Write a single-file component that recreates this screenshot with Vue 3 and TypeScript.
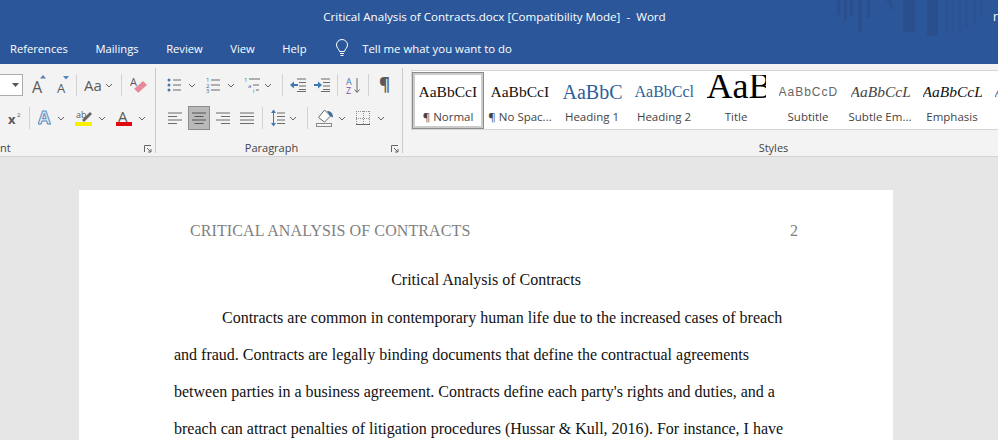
<script setup lang="ts">
import { ref } from "vue";

const tabs = ref(["References", "Mailings", "Review", "View", "Help"]);

// Style gallery
const styles = ref([
  { name: "¶ Normal", cls: "normal" },
  { name: "¶ No Spac...", cls: "nospace" },
  { name: "Heading 1", cls: "h1" },
  { name: "Heading 2", cls: "h2" },
  { name: "Title", cls: "title" },
  { name: "Subtitle", cls: "subtitle" },
  { name: "Subtle Em...", cls: "subtle" },
  { name: "Emphasis", cls: "emphasis" },
  { name: "", cls: "intense" },
]);

const previewText: Record<string, string> = {
  normal: "AaBbCcI",
  nospace: "AaBbCcI",
  h1: "AaBbC",
  h2: "AaBbCcl",
  title: "AaB",
  subtitle: "AaBbCcD",
  subtle: "AaBbCcL",
  emphasis: "AaBbCcL",
  intense: "AaBbCcL",
};

const bodyLines = ref([
  "Contracts are common in contemporary human life due to the increased cases of breach",
  "and fraud. Contracts are legally binding documents that define the contractual agreements",
  "between parties in a business agreement. Contracts define each party's rights and duties, and a",
  "breach can attract penalties of litigation procedures (Hussar & Kull, 2016). For instance, I have",
]);

// darker stripes of the title bar artwork: x, width, height
const stripes = [
  [57, 3, 15], [64, 3, 21], [70, 3, 15], [78, 4, 32], [87, 3, 18],
  [123, 12, 32], [147, 11, 36],
];
const faintStripes = [
  [165, 3, 34], [172, 3, 34], [178, 3, 32], [185, 3, 28], [193, 3, 24], [200, 3, 16],
];
</script>

<template>
  <div class="word">
    <header class="titlebar">
      <svg class="art" width="220" height="40" aria-hidden="true">
        <rect
          v-for="s in stripes"
          :key="s[0]"
          :x="s[0]"
          y="0"
          :width="s[1]"
          :height="s[2]"
          fill="#2a4f8c"
        />
        <rect
          v-for="s in faintStripes"
          :key="s[0]"
          :x="s[0]"
          y="0"
          :width="s[1]"
          :height="s[2]"
          fill="#2b5394"
        />
        <path d="M106 0h5l4 13z" fill="#2a4f8c" />
      </svg>
      <span class="doc-title">Critical Analysis of Contracts.docx [Compatibility Mode]&nbsp; -&nbsp; Word</span>
      <span class="user">re</span>
    </header>

    <nav class="tabs">
      <span v-for="t in tabs" :key="t" class="tab">{{ t }}</span>
      <svg class="bulb" width="14" height="18" viewBox="0 0 14 18" fill="none" stroke="#fff" stroke-width="1">
        <path d="M4.5 12.5c0-2-3-3.500-3-6.500a5.500 5.500 0 0 1 11 0c0 3-3 4.500-3 6.500z" />
        <path d="M5 14.500h4M5.500 16.500h3" />
      </svg>
      <span class="tell">Tell me what you want to do</span>
    </nav>

    <section class="ribbon">
      <!-- Font -->
      <div class="group font-group">
        <div class="row">
          <div class="size-box"><svg width="7" height="4"><path d="M0 0h7L3.500 4z" fill="#555" /></svg></div>
          <svg class="ml9" width="14" height="20">
            <text x="0" y="18" class="glyph" font-size="16">A</text>
            <path d="M8 3.500h6L11 0z" fill="#5b7fa8" />
          </svg>
          <svg class="ml11" width="13" height="20">
            <text x="0" y="18" class="glyph" font-size="13">A</text>
            <path d="M6 1h6L9 4.500z" fill="#4e86c0" />
          </svg>
          <i class="sep ml6"></i>
          <svg class="ml7" width="17" height="20"><text x="0" y="16" class="glyph" font-size="15">Aa</text></svg>
          <svg class="chev ml4" width="8" height="5"><path d="M1 1l3 3 3-3" /></svg>
          <i class="sep ml8"></i>
          <svg class="ml8" width="17" height="20">
            <text x="0" y="11" class="glyph" font-size="11">A</text>
            <path d="M4 14l9-8 4 4-9 8z" fill="#e8899a" />
            <path d="M4 14l4 4" stroke="#fbe4e8" />
          </svg>
        </div>
        <div class="row row2">
          <svg class="ml8" width="13" height="14">
            <text x="0" y="13" class="glyph bold" font-size="13">x</text>
            <text x="9" y="6" class="glyph" font-size="6">2</text>
          </svg>
          <i class="sep ml8"></i>
          <svg class="ml8" width="15" height="18">
            <text x="0" y="15" class="effect" font-size="18">A</text>
          </svg>
          <svg class="chev ml4" width="8" height="5"><path d="M1 1l3 3 3-3" /></svg>
          <svg class="ml10" width="18" height="18">
            <text x="1" y="9" class="glyph" font-size="9">ab</text>
            <path d="M7 11l8-8 2 2-8 8z" fill="#666" />
            <rect x="0" y="13" width="17" height="4" fill="#f7f000" />
          </svg>
          <svg class="chev ml5" width="8" height="5"><path d="M1 1l3 3 3-3" /></svg>
          <svg class="ml10" width="16" height="18">
            <text x="2" y="13" class="glyph" font-size="15">A</text>
            <rect x="0" y="13" width="16" height="4" fill="#e00b12" />
          </svg>
          <svg class="chev ml6" width="8" height="5"><path d="M1 1l3 3 3-3" /></svg>
        </div>
        <div class="group-label font-label">
          <span class="clipped">nt</span>
          <svg class="launcher" width="8" height="8"><path d="M.5 7V.5H7M3 3l4 4M4 7h3V4" /></svg>
        </div>
      </div>

      <!-- Paragraph -->
      <div class="group para-group">
        <div class="row">
          <svg class="ml11" width="14" height="14">
            <g fill="#4b75a5"><circle cx="2" cy="2" r="1.500" /><circle cx="2" cy="7" r="1.500" /><circle cx="2" cy="12" r="1.500" /></g>
            <path d="M6 2h8M6 7h8M6 12h8" stroke="#6b6b6b" />
          </svg>
          <svg class="chev ml7" width="8" height="5"><path d="M1 1l3 3 3-3" /></svg>
          <svg class="ml10" width="14" height="16">
            <g class="tiny"><text x="0" y="5">1</text><text x="0" y="10.500">2</text><text x="0" y="16">3</text></g>
            <path d="M5 3h9M5 8h9M5 13h9" stroke="#6b6b6b" />
          </svg>
          <svg class="chev ml7" width="8" height="5"><path d="M1 1l3 3 3-3" /></svg>
          <svg class="ml9" width="16" height="16">
            <g class="tiny"><text x="0" y="5">1</text><text x="4" y="10.500">a</text><text x="9" y="16" fill="#666">i</text></g>
            <path d="M5 2h11M9 8h6M12 13h3" stroke="#6b6b6b" />
          </svg>
          <svg class="chev ml4" width="8" height="5"><path d="M1 1l3 3 3-3" /></svg>
          <i class="sep ml10"></i>
          <svg class="ml7" width="16" height="14">
            <path d="M7 1h9M9 4.500h7M9 8h7M9 11.500h7M7 13.500h9" stroke="#6b6b6b" />
            <path d="M0 7l4-3.500V6h4v2H4v2.500z" fill="#3c78b5" />
          </svg>
          <svg class="ml8" width="16" height="14">
            <path d="M7 1h9M9 4.500h7M9 8h7M9 11.500h7M7 13.500h9" stroke="#6b6b6b" />
            <path d="M8 7L4 3.500V6H0v2h4v2.500z" fill="#3c78b5" />
          </svg>
          <i class="sep ml7"></i>
          <svg class="ml8" width="14" height="17">
            <text x="0" y="8" class="sort-a" font-size="9">A</text>
            <text x="0" y="16.500" class="sort-z" font-size="9">Z</text>
            <path d="M11 1v14M8.500 12.500l2.500 3 2.500-3" fill="none" stroke="#666" />
          </svg>
          <i class="sep ml8"></i>
          <svg class="ml10" width="11" height="18"><text x="0" y="15" class="glyph bold" font-size="17">¶</text></svg>
        </div>
        <div class="row row2">
          <svg class="ml12" width="14" height="12"><path d="M0 1h14M0 4.500h9M0 8h14M0 11.500h9" stroke="#6b6b6b" /></svg>
          <div class="selected ml6">
            <svg width="14" height="12"><path d="M0 1h14M2.500 4.500h9M0 8h14M2.500 11.500h9" stroke="#555" /></svg>
          </div>
          <svg class="ml6" width="14" height="12"><path d="M0 1h14M5 4.500h9M0 8h14M5 11.500h9" stroke="#6b6b6b" /></svg>
          <svg class="ml10" width="14" height="12"><path d="M0 1h14M0 4.500h14M0 8h14M0 11.500h14" stroke="#6b6b6b" /></svg>
          <i class="sep ml8"></i>
          <svg class="ml8" width="14" height="18">
            <path d="M6 4h8M6 7.500h8M6 11h8M6 14.500h8" stroke="#6b6b6b" />
            <path d="M2.500 3v12" stroke="#3c78b5" />
            <path d="M0 4l2.500-3.500L5 4zM0 14l2.500 3.500L5 14z" fill="#3c78b5" />
          </svg>
          <svg class="chev ml4" width="8" height="5"><path d="M1 1l3 3 3-3" /></svg>
          <i class="sep ml10"></i>
          <svg class="ml8" width="18" height="18">
            <path d="M2.500 8.500L8.500 1l6 6-6 6z" fill="#fff" stroke="#666" />
            <path d="M11 2c4 0 6 2.500 6 6.500l-3-1.500z" fill="#3f6f9f" />
            <rect x=".5" y="14.500" width="15" height="3" fill="#f7f7f7" stroke="#8a8a8a" />
          </svg>
          <svg class="chev ml4" width="8" height="5"><path d="M1 1l3 3 3-3" /></svg>
          <svg class="ml10" width="14" height="14">
            <path d="M0 .5h14M0 7.500h14M.5 0v14M7.500 0v14M13.500 0v14" fill="none" stroke="#8f8f8f" stroke-dasharray="1 1" />
            <path d="M0 13.500h14" stroke="#666" />
          </svg>
          <svg class="chev ml7" width="8" height="5"><path d="M1 1l3 3 3-3" /></svg>
        </div>
        <div class="group-label para-label">
          Paragraph
          <svg class="launcher" width="8" height="8"><path d="M.5 7V.5H7M3 3l4 4M4 7h3V4" /></svg>
        </div>
      </div>

      <!-- Styles -->
      <div class="group styles-group">
        <div class="gallery">
          <div
            v-for="s in styles"
            :key="s.cls"
            class="style-item"
            :class="{ active: s.cls === 'normal' }"
          >
            <div class="preview" :class="s.cls">{{ previewText[s.cls] }}</div>
            <div class="style-name">{{ s.name }}</div>
          </div>
        </div>
        <div class="group-label styles-label">Styles</div>
      </div>
    </section>

    <main class="canvas">
      <article class="page">
        <div class="page-header">
          <span class="running-head">CRITICAL ANALYSIS OF CONTRACTS</span>
          <span>2</span>
        </div>
        <h1 class="doc-heading">Critical Analysis of Contracts</h1>
        <p
          v-for="(line, i) in bodyLines"
          :key="i"
          class="line"
          :class="{ indent: i === 0 }"
        >
          {{ line }}
        </p>
      </article>
    </main>
  </div>
</template>

<style scoped>
.word {
  width: 998px;
  height: 440px;
  overflow: hidden;
  position: relative;
  background: #e6e6e6;
  font-family: "Open Sans", "Noto Sans", sans-serif;
}

.titlebar {
  height: 32px;
  background: #2b579a;
  color: #fff;
  position: relative;
  display: flex;
  justify-content: center;
  align-items: center;
}

.art {
  position: absolute;
  left: 780px;
  top: 0;
}

.doc-title {
  font-size: 11.600px;
  margin-left: -9px;
}

.user {
  position: absolute;
  left: 993px;
  top: 8px;
  font-size: 12px;
}

.tabs {
  height: 32px;
  background: #2b579a;
  color: #fff;
  display: flex;
  align-items: center;
  padding-left: 10px;
  font-size: 11.200px;
}

.tab {
  margin-right: 27.600px;
}

.bulb {
  margin-left: 1px;
}

.tell {
  margin-left: 13px;
  font-size: 11.400px;
}

.ribbon {
  height: 92px;
  background: #f3f3f3;
  border-bottom: 1px solid #d4d4d4;
  display: flex;
}

.group {
  position: relative;
  flex: none;
  height: 92px;
  box-sizing: border-box;
  padding-top: 10px;
}

.group::after {
  content: "";
  position: absolute;
  right: 0;
  top: 4px;
  bottom: 3px;
  width: 1px;
  background: #c9c9c9;
}

.font-group {
  width: 156px;
}

.para-group {
  width: 247px;
}

.styles-group {
  width: 595px;
  padding-top: 6px;
  padding-left: 8px;
}

.styles-group::after {
  display: none;
}

.row {
  height: 22px;
  display: flex;
  align-items: center;
}

.row2 {
  margin-top: 11px;
}

.size-box {
  width: 23px;
  height: 22px;
  box-sizing: border-box;
  background: #fff;
  border: 1px solid #ababab;
  border-left: none;
  display: flex;
  align-items: center;
  justify-content: flex-end;
  padding-right: 3px;
}

.sep {
  display: block;
  width: 1px;
  height: 22px;
  background: #d2d2d2;
}

.ml4 { margin-left: 4px; }
.ml5 { margin-left: 5px; }
.ml6 { margin-left: 6px; }
.ml7 { margin-left: 7px; }
.ml8 { margin-left: 8px; }
.ml9 { margin-left: 9px; }
.ml10 { margin-left: 10px; }
.ml11 { margin-left: 11px; }
.ml12 { margin-left: 12px; }

.chev {
  fill: none;
  stroke: #666;
  stroke-width: 1;
}

.glyph {
  font-family: "Open Sans", sans-serif;
  fill: #5a5a5a;
}

.bold {
  font-weight: 700;
}

.effect {
  font-family: "Open Sans", sans-serif;
  font-weight: 700;
  fill: #e3edf7;
  stroke: #5f8fc0;
  stroke-width: 1;
}

.tiny {
  font-family: "Open Sans", sans-serif;
  font-size: 6px;
  fill: #3c6ea5;
}

.sort-a {
  font-family: "Open Sans", sans-serif;
  fill: #3c78b5;
}

.sort-z {
  font-family: "Open Sans", sans-serif;
  fill: #8a4fa0;
}

.selected {
  width: 22px;
  height: 24px;
  box-sizing: border-box;
  background: #b9b9b9;
  border: 1px solid #8c8c8c;
  display: flex;
  align-items: center;
  justify-content: center;
}

.group-label {
  position: absolute;
  left: 0;
  right: 0;
  top: 76px;
  text-align: center;
  font-size: 11px;
  line-height: 16px;
  color: #444;
}

.font-label {
  text-align: left;
}

.para-label {
  padding-right: 16px;
}

.styles-label {
  padding-left: 146px;
}

.clipped {
  font-size: 11px;
}

.launcher {
  position: absolute;
  right: 4px;
  top: 5px;
  fill: none;
  stroke: #666;
  stroke-width: 1;
}

.gallery {
  display: flex;
  height: 60px;
  width: 587px;
  box-sizing: border-box;
  background: #fff;
  border-top: 1px solid #d6d6d6;
  border-bottom: 1px solid #d6d6d6;
  border-left: 1px solid #d6d6d6;
  overflow: hidden;
}

.style-item {
  flex: 0 0 72px;
  box-sizing: border-box;
  height: 58px;
  padding-top: 4px;
  text-align: center;
}

.style-item.active {
  height: 57px;
  margin-top: 1px;
  padding-top: 2px;
  border: 1px solid #8c8c8c;
  box-shadow: inset 0 0 0 2px #cbcbcb;
}

.preview {
  width: 59px;
  height: 34px;
  margin: 0 auto;
  overflow: hidden;
  white-space: nowrap;
  font-family: "Liberation Serif", serif;
  font-size: 15.500px;
  line-height: 34px;
  text-align: left;
  color: #111;
}

.preview.h1 {
  font-size: 20px;
  color: #2e5f9a;
}

.preview.h2 {
  font-size: 16px;
  color: #2e5f9a;
}

.preview.title {
  font-size: 36px;
  line-height: 23px;
  color: #000;
}

.preview.subtitle {
  font-family: "Liberation Sans", sans-serif;
  font-size: 12px;
  letter-spacing: 1px;
  color: #666;
}

.preview.subtle {
  font-style: italic;
  color: #444;
}

.preview.emphasis {
  font-style: italic;
  color: #111;
}

.preview.intense {
  font-style: italic;
  color: #2e5f9a;
}

.style-name {
  font-size: 11.500px;
  line-height: 16px;
  color: #444;
  white-space: nowrap;
}

.canvas {
  padding: 33px 0 0 79px;
}

.page {
  width: 814px;
  height: 300px;
  box-sizing: border-box;
  background: #fff;
  padding: 29px 95px 0 95px;
  font-family: "Liberation Serif", serif;
  font-size: 16px;
  color: #111;
}

.page-header {
  display: flex;
  justify-content: space-between;
  padding: 0 0 0 16px;
  line-height: 24px;
  color: #7f7f7f;
}

.running-head {
  letter-spacing: 0.100px;
}

.doc-heading {
  margin: 25px 0 0;
  font-size: 16px;
  font-weight: 400;
  line-height: 24px;
  text-align: center;
}

.line {
  margin: 13px 0 0;
  line-height: 24px;
  white-space: nowrap;
}

.doc-heading + .line {
  margin-top: 14px;
}

.line.indent {
  padding-left: 48px;
}
</style>
